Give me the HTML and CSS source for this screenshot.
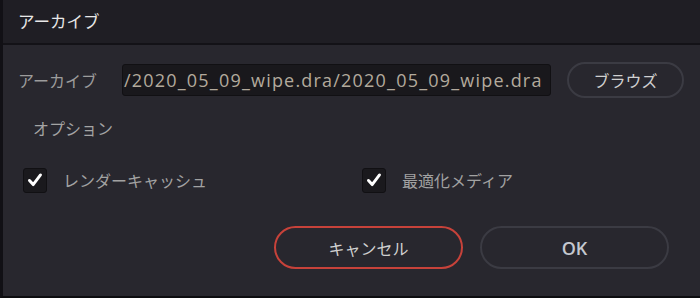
FILE: index.html
```html
<!DOCTYPE html>
<html lang="ja">
<head>
<meta charset="utf-8">
<link rel="stylesheet" href="styles.css">
</head>
<body>
<div class="dialog">
  <div class="titlebar">アーカイブ</div>
  <div class="content">
    <div class="path-row">
      <span class="label">アーカイブ</span>
      <div class="input"><span class="input-text">/2020_05_09_wipe.dra/2020_05_09_wipe.dra</span></div>
      <button class="btn browse">ブラウズ</button>
    </div>
    <div class="section">オプション</div>
    <div class="options">
      <label class="opt">
        <span class="box"><svg viewBox="0 0 24 24" width="24" height="24"><path d="M6 12.5 L10 17 L18 6.5" fill="none" stroke="#fff" stroke-width="3.2" stroke-linecap="round" stroke-linejoin="round"/></svg></span>
        <span class="opt-text">レンダーキャッシュ</span>
      </label>
      <label class="opt">
        <span class="box"><svg viewBox="0 0 24 24" width="24" height="24"><path d="M6 12.5 L10 17 L18 6.5" fill="none" stroke="#fff" stroke-width="3.2" stroke-linecap="round" stroke-linejoin="round"/></svg></span>
        <span class="opt-text">最適化メディア</span>
      </label>
    </div>
    <div class="actions">
      <button class="btn action cancel">キャンセル</button>
      <button class="btn action ok">OK</button>
    </div>
  </div>
</div>
</body>
</html>
```
FILE: styles.css
```css
html, body {
  margin: 0;
  padding: 0;
  background: #28272e;
}
body {
  font-family: "Noto Sans CJK JP", "Noto Sans", sans-serif;
}
.dialog {
  width: 700px;
  height: 298px;
  box-sizing: border-box;
  background: #28272e;
  border-left: 3px solid #111015;
  border-bottom: 2px solid #0d0d10;
  display: flex;
  flex-direction: column;
}
.titlebar {
  height: 45px;
  box-sizing: border-box;
  background: #1f1e24;
  border-bottom: 2px solid #131217;
  padding-left: 15px;
  display: flex;
  align-items: center;
  color: #e8e8e8;
  font-size: 16.5px;
  line-height: 1;
  flex: none;
}
.content {
  flex: 1;
  display: flex;
  flex-direction: column;
}
.path-row {
  margin-top: 17px;
  height: 36px;
  display: flex;
  align-items: center;
  padding-left: 15px;
}
.label {
  width: 104px;
  color: #9c9c9c;
  font-size: 16px;
  line-height: 1;
}
.input {
  width: 429px;
  height: 32px;
  box-sizing: border-box;
  background: #19181c;
  border: 1px solid #111013;
  border-radius: 3px;
  overflow: hidden;
  display: flex;
  align-items: center;
  white-space: nowrap;
}
.input-text {
  font-family: "Open Sans", "Noto Sans", sans-serif;
  font-size: 18px;
  letter-spacing: 1.2px;
  color: #b3aa9d;
  padding-left: 1px;
}
.btn {
  font-family: "Noto Sans CJK JP", "Noto Sans", sans-serif;
  background: transparent;
  box-sizing: border-box;
  border: 2px solid #3b3b43;
  border-radius: 22px;
  color: #d0d0d0;
  padding: 0;
  line-height: 1;
}
.browse {
  margin-left: 16px;
  width: 117px;
  height: 36px;
  font-size: 16px;
}
.section {
  margin-top: 20px;
  padding-left: 30px;
  height: 20px;
  display: flex;
  align-items: center;
  color: #a4a4a4;
  font-size: 16px;
}
.options {
  margin-top: 29px;
  padding-left: 20px;
  display: grid;
  grid-template-columns: 339px 1fr;
}
.opt {
  display: flex;
  align-items: center;
  height: 26px;
}
.box {
  width: 24px;
  height: 25px;
  box-sizing: border-box;
  background: #1a191d;
  border: 1px solid #111013;
  border-radius: 3px;
  display: flex;
  align-items: center;
  justify-content: center;
}
.box svg {
  display: block;
}
.opt-text {
  margin-left: 16px;
  color: #a2a2a2;
  font-size: 16px;
  line-height: 1;
}
.actions {
  margin-top: 33px;
  display: flex;
  justify-content: flex-end;
  gap: 17px;
  padding-right: 31px;
}
.action {
  width: 189px;
  height: 43px;
  font-size: 16px;
}
.cancel {
  border-color: #c7423a;
}
.ok {
  font-family: "Open Sans", "Noto Sans", sans-serif;
  font-weight: 600;
  color: #c4c8d0;
  font-size: 18px;
}
```
